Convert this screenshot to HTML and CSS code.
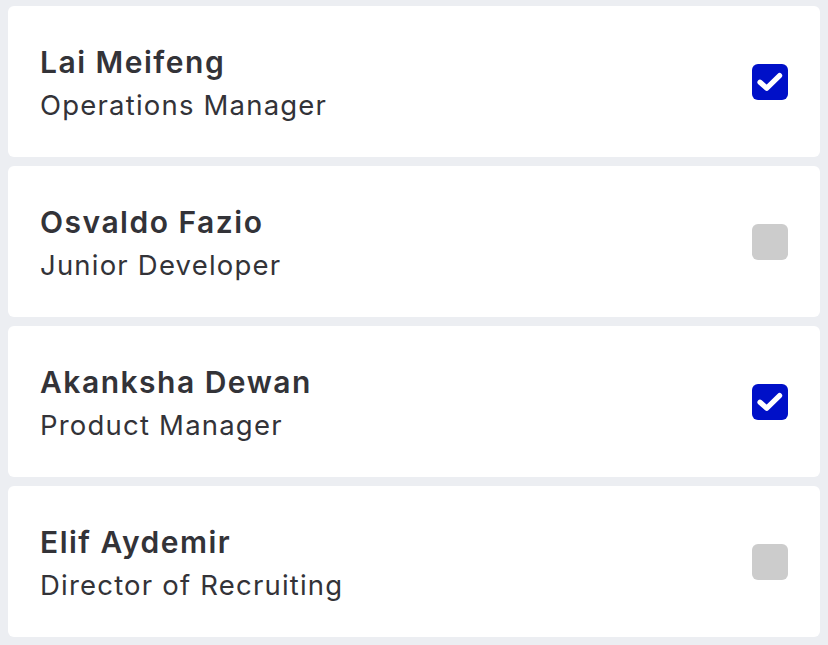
FILE: index.html
```html
<!DOCTYPE html>
<html>
<head>
<meta charset="utf-8">
<link rel="stylesheet" href="styles.css">
</head>
<body>
<div class="list">
  <div class="card">
    <div class="info">
      <div class="name">Lai Meifeng</div>
      <div class="role">Operations Manager</div>
    </div>
    <div class="box checked"><svg viewBox="0 0 36 36" width="36" height="36"><path d="M8 18.2 L14.8 24.2 L27.6 11.6" fill="none" stroke="#fff" stroke-width="5.2" stroke-linecap="round" stroke-linejoin="round"/></svg></div>
  </div>
  <div class="card">
    <div class="info">
      <div class="name">Osvaldo Fazio</div>
      <div class="role">Junior Developer</div>
    </div>
    <div class="box"></div>
  </div>
  <div class="card">
    <div class="info">
      <div class="name">Akanksha Dewan</div>
      <div class="role">Product Manager</div>
    </div>
    <div class="box checked"><svg viewBox="0 0 36 36" width="36" height="36"><path d="M8 18.2 L14.8 24.2 L27.6 11.6" fill="none" stroke="#fff" stroke-width="5.2" stroke-linecap="round" stroke-linejoin="round"/></svg></div>
  </div>
  <div class="card">
    <div class="info">
      <div class="name">Elif Aydemir</div>
      <div class="role">Director of Recruiting</div>
    </div>
    <div class="box"></div>
  </div>
</div>
</body>
</html>
```
FILE: styles.css
```css
html, body {
  margin: 0;
  padding: 0;
  background: #eceef2;
}
body {
  font-family: "Inter", "Liberation Sans", sans-serif;
  color: #333338;
}
.list {
  display: flex;
  flex-direction: column;
  gap: 9px;
  padding: 6px 8px 8px 8px;
}
.card {
  height: 151px;
  box-sizing: border-box;
  background: #ffffff;
  border-radius: 6px;
  display: flex;
  align-items: center;
  justify-content: space-between;
  padding: 0 32px;
}
.info {
  display: flex;
  flex-direction: column;
  margin-top: 5px;
}
.name {
  font-size: 30px;
  font-weight: 600;
  line-height: 43px;
  letter-spacing: 1.5px;
}
.role {
  font-size: 27.5px;
  font-weight: 400;
  line-height: 43px;
  letter-spacing: 1.2px;
}
.box {
  width: 36px;
  height: 36px;
  border-radius: 6px;
  background: #cccccc;
  display: flex;
}
.box.checked {
  background: #0010c8;
}
```
